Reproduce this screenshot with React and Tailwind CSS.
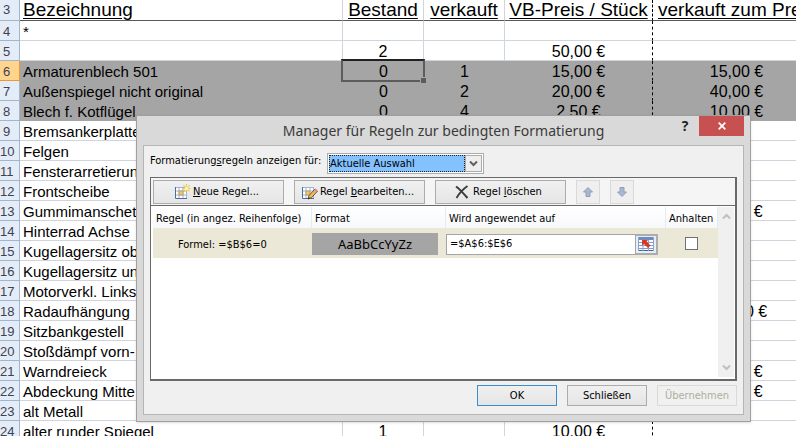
const rows = [
  { n: 4, name: '*' },
  { n: 5, name: '', stock: '2', price: '50,00 €' },
  { n: 6, name: 'Armaturenblech 501', stock: '0', sold: '1', price: '15,00 €', total: '15,00 €', active: true },
  { n: 7, name: 'Außenspiegel nicht original', stock: '0', sold: '2', price: '20,00 €', total: '40,00 €', grey: true },
  { n: 8, name: 'Blech f. Kotflügel', stock: '0', sold: '4', price: '2,50 €', total: '10,00 €', grey: true },
  { n: 9, name: 'Bremsankerplatte' },
  { n: 10, name: 'Felgen' },
  { n: 11, name: 'Fensterarretierung' },
  { n: 12, name: 'Frontscheibe' },
  { n: 13, name: 'Gummimanschette', total: '10,00 €' },
  { n: 14, name: 'Hinterrad Achse' },
  { n: 15, name: 'Kugellagersitz oben' },
  { n: 16, name: 'Kugellagersitz unten' },
  { n: 17, name: 'Motorverkl. Links' },
  { n: 18, name: 'Radaufhängung', total: '100,00 €' },
  { n: 19, name: 'Sitzbankgestell' },
  { n: 20, name: 'Stoßdämpf vorn-' },
  { n: 21, name: 'Warndreieck', total: '10,00 €' },
  { n: 22, name: 'Abdeckung Mitte', total: '10,00 €' },
  { n: 23, name: 'alt Metall' },
  { n: 24, name: 'alter runder Spiegel', stock: '1', price: '10,00 €' },
];

function SheetRow({ row }) {
  const grey = row.active || row.grey;
  const cell = grey
    ? 'bg-[#a5a5a5] border-b border-[#a5a5a5] p-0 pt-0.5 text-center whitespace-nowrap'
    : 'border-b border-r border-[#d0d4dc] p-0 pt-0.5 text-center whitespace-nowrap';
  const dashed = grey
    ? 'bg-[#a5a5a5] border-b border-r border-b-[#a5a5a5] border-r-black [border-right-style:dashed] p-0 pt-0.5 text-center whitespace-nowrap'
    : 'border-b border-r border-b-[#d0d4dc] border-r-black [border-right-style:dashed] p-0 pt-0.5 text-center whitespace-nowrap';
  return (
    <tr className="h-5">
      <th
        scope="row"
        className={
          row.active
            ? 'border-b border-r border-[#f29536] bg-[#ffd58d] p-0 pt-0.5 pr-1.5 text-center text-[13px] leading-[17px] font-normal text-[#3b4252]'
            : 'border-b border-r border-[#9eb6ce] bg-[#e4ecf7] p-0 pt-0.5 pr-1.5 text-center text-[13px] leading-[17px] font-normal text-[#3b4252]'
        }
      >
        {row.n}
      </th>
      <td className={cell}>
        <div className="pl-[3px] text-left text-[15px] leading-[17px]">{row.name}</div>
      </td>
      <td className={cell}>
        {row.active ? (
          <div className="relative">
            {row.stock}
            <span className="absolute -top-1 -right-px bottom-[-2px] -left-[2px] border-2 border-[#5c5c5c] border-t-[#202020]" />
            <span className="absolute -right-[2px] -bottom-[3px] size-[6px] border-t border-l border-[#a5a5a5] bg-[#5c5c5c]" />
          </div>
        ) : (
          row.stock
        )}
      </td>
      <td className={cell}>{row.sold}</td>
      <td className={dashed}>{row.price}</td>
      <td className={cell}>{row.total}</td>
    </tr>
  );
}

function Sheet() {
  const head = 'border-b border-[#5a5a5a] border-r border-r-[#d0d4dc] p-0 font-normal whitespace-nowrap underline underline-offset-2';
  return (
    <table className="w-full min-w-[820px] table-fixed border-separate border-spacing-0 text-base leading-[17px]">
      <colgroup>
        <col className="w-5" />
        <col className="w-[323px]" />
        <col className="w-[81px]" />
        <col className="w-[81px]" />
        <col className="w-[148px]" />
        <col />
      </colgroup>
      <thead>
        <tr className="h-[21px] text-[19px] leading-5">
          <th className="border-r border-b border-[#9eb6ce] bg-[#e4ecf7] p-0 pr-1.5 text-[13px] leading-5 font-normal text-[#3b4252]">3</th>
          <th scope="col" className={head}>
            <div className="pl-[3px] text-left">Bezeichnung</div>
          </th>
          <th scope="col" className={head}>Bestand</th>
          <th scope="col" className={head}>verkauft</th>
          <th scope="col" className="border-r border-b border-r-black border-b-[#5a5a5a] [border-right-style:dashed] p-0 font-normal whitespace-nowrap underline underline-offset-2">VB-Preis / Stück</th>
          <th scope="col" className={head}>
            <div className="pl-[5px] text-left">verkauft zum Preis</div>
          </th>
        </tr>
      </thead>
      <tbody>
        {rows.map((row) => (
          <SheetRow key={row.n} row={row} />
        ))}
      </tbody>
    </table>
  );
}

function GridIcon({ children }) {
  return (
    <svg width="17" height="17" viewBox="0 0 17 17" aria-hidden="true">
      <rect x="1" y="3" width="12" height="12" fill="#fff" />
      <path d="M5 3v12M9 3v12M12.500 3v12" stroke="#9fb4d6" />
      <path d="M1 3.500h12M1 7h12M1 11h12" stroke="#9fb4d6" />
      <path d="M1.500 3v11.500h11.500" fill="none" stroke="#4a6ba3" />
      <rect x="5" y="7" width="4" height="4" fill="#f3c75c" stroke="#a8935a" strokeWidth=".7" />
      {children}
    </svg>
  );
}

function NewRuleIcon() {
  return (
    <GridIcon>
      <path d="M12.500 0v9M8 4.500h9M9.500 1.500l6 6M15.500 1.500l-6 6" stroke="#edc52a" strokeWidth="1.200" strokeDasharray="1.500 .6" />
      <circle cx="12.500" cy="4.500" r="1.700" fill="#fff6b0" />
    </GridIcon>
  );
}

function EditRuleIcon() {
  return (
    <GridIcon>
      <path d="M7 15l1-3.500 6-6.500 2.500 2.200-6 6.500z" fill="#f0b858" stroke="#5c4a33" strokeWidth=".9" />
      <path d="M13 6l1.500-1.500 2 2L15 8z" fill="#d98c8c" />
      <path d="M7 15l.7-2 1.300 1.200z" fill="#222" />
    </GridIcon>
  );
}

function DeleteIcon() {
  return (
    <svg width="16" height="14" viewBox="0 0 16 14" aria-hidden="true">
      <path d="M1 1.500C4 3.500 9 9 12.500 13" stroke="#3c3c3c" strokeWidth="2" fill="none" />
      <path d="M12.500 1C9 3.500 4 8.500 1.500 13" stroke="#3c3c3c" strokeWidth="1.800" fill="none" />
    </svg>
  );
}

function ArrowIcon({ down }) {
  return (
    <svg width="10" height="10" viewBox="0 0 10 10" aria-hidden="true">
      <path
        d={down ? 'M5 9.500L.5 5H3V.5h4V5h2.500z' : 'M5 .5L.5 5H3v4.500h4V5h2.500z'}
        fill="#a9b8cf"
        stroke="#8f9fb9"
      />
    </svg>
  );
}

function RangeIcon() {
  return (
    <svg width="16" height="14" viewBox="0 0 16 14" aria-hidden="true">
      <rect x="0" y="0" width="16" height="14" fill="#fff" />
      <rect x="0" y="0" width="16" height="3" fill="#6d8cc0" />
      <path d="M0 5.500h16M0 8.500h16M0 11.500h16" stroke="#7f9ccb" />
      <path d="M0 13.500h16" stroke="#3f62a0" />
      <path d="M.5 0v14M5 3v11M10.500 3v11M15.500 0v14" stroke="#89a4cf" />
      <path d="M4 3h6L8.500 4.500l4 4-2.500 2.500-4-4L4 8.500z" fill="#d9371f" />
    </svg>
  );
}

function Chevron({ up, stroke }) {
  return (
    <svg width="9" height="7" viewBox="0 0 9 7" aria-hidden="true">
      <path d={up ? 'M1 5.500L4.500 2L8 5.500' : 'M1 1.500L4.500 5L8 1.500'} fill="none" stroke={stroke} strokeWidth="2" />
    </svg>
  );
}

const toolButton =
  'flex h-6 w-[131px] items-center justify-center gap-0.5 border border-[#acacac] bg-linear-to-b from-[#f0f0f0] to-[#e5e5e5] pt-px pr-1 whitespace-nowrap';
const arrowButton = 'flex size-6 items-center justify-center border border-[#d9d9d9] bg-[#efefef]';
const footButton = 'h-[21px] w-20 border bg-linear-to-b from-[#f0f0f0] to-[#e5e5e5] pt-0.5';

function Toolbar() {
  return (
    <div className="flex h-7 items-center border-b border-[#696969] bg-[#f5f5f5] pl-0.5">
      <div className="flex gap-2.5">
        <button type="button" className={toolButton}>
          <NewRuleIcon />
          <span><u>N</u>eue Regel...</span>
        </button>
        <button type="button" className={toolButton}>
          <EditRuleIcon />
          <span>Regel <u>b</u>earbeiten...</span>
        </button>
        <button type="button" className={toolButton}>
          <DeleteIcon />
          <span>Regel <u>l</u>öschen</span>
        </button>
        <button type="button" aria-label="Nach oben" className={arrowButton}>
          <ArrowIcon />
        </button>
        <button type="button" aria-label="Nach unten" className={arrowButton}>
          <ArrowIcon down />
        </button>
      </div>
    </div>
  );
}

function RuleList() {
  const th = 'border-r border-[#e3ebf3] p-0 pt-1 pl-[3px] text-left font-normal whitespace-nowrap';
  return (
    <div className="flex h-[173px] justify-between bg-white pt-px pr-px pb-0.5 pl-0.5">
      <table className="w-[565px] table-fixed border-separate border-spacing-0 self-start">
        <colgroup>
          <col className="w-[159px]" />
          <col className="w-[134px]" />
          <col className="w-[220px]" />
          <col />
        </colgroup>
        <thead>
          <tr className="h-[21px] bg-linear-to-b from-white to-[#f7f8fa]">
            <th scope="col" className={th}>Regel (in angez. Reihenfolge)</th>
            <th scope="col" className={th}>Format</th>
            <th scope="col" className={th}>Wird angewendet auf</th>
            <th scope="col" className={th}>Anhalten</th>
          </tr>
        </thead>
        <tbody>
          <tr className="h-[30px] bg-[#ebe8d7]">
            <td className="p-0 pt-1 pl-[25px]">Formel: =$B$6=0</td>
            <td className="p-0 pt-0.5 pr-2">
              <div className="h-[22px] bg-[#a5a5a5] text-center font-['Noto_Sans',sans-serif] text-[13px] leading-[22px]">AaBbCcYyZz</div>
            </td>
            <td className="p-0 pt-0.5 pr-2">
              <div className="flex h-[21px]">
                <input
                  aria-label="Wird angewendet auf"
                  defaultValue="=$A$6:$E$6"
                  className="min-w-0 flex-1 border border-[#a5a5a5] bg-white pt-px pl-[3px] outline-none"
                />
                <button type="button" aria-label="Bereich auswählen" className="flex w-[22px] items-center justify-center border-2 border-l-0 border-[#acacac] bg-[#e8edf5]">
                  <RangeIcon />
                </button>
              </div>
            </td>
            <td className="p-0">
              <input
                type="checkbox"
                aria-label="Anhalten"
                className="ml-[19px] block size-[13px] appearance-none border border-[#707070] bg-white"
              />
            </td>
          </tr>
        </tbody>
      </table>
      <div className="flex w-4 flex-col items-center justify-between bg-[#f0f0f0] py-1.5">
        <Chevron up stroke="#bfbfbf" />
        <Chevron stroke="#bfbfbf" />
      </div>
    </div>
  );
}

function RuleManager() {
  return (
    <section
      role="dialog"
      aria-labelledby="rule-manager-title"
      className="absolute top-[115px] left-[136px] w-[615px] border border-[#a0a0a0] bg-[#d9d9d9] px-1.5 pb-1.5 font-['DejaVu_Sans_Condensed','DejaVu_Sans',sans-serif] text-[11px] text-black shadow-sm"
    >
      <header className="relative flex h-[29px] items-center justify-center">
        <h1 id="rule-manager-title" className="font-['Noto_Sans',sans-serif] text-sm text-[#3a3a3a]">
          Manager für Regeln zur bedingten Formatierung
        </h1>
        <div className="absolute top-0 right-0 flex">
          <button type="button" aria-label="Hilfe" className="h-5 w-7 font-['Open_Sans',sans-serif] text-sm leading-5 font-bold text-[#222]">?</button>
          <button type="button" aria-label="Fenster schließen" className="flex h-5 w-[45px] items-center justify-center bg-[#c75050]">
            <svg width="8" height="8" viewBox="0 0 8 8" aria-hidden="true">
              <path d="M.7.700l6.600 6.600M7.300.700L.7 7.300" stroke="#fff" strokeWidth="1.700" />
            </svg>
          </button>
        </div>
      </header>
      <div className="border border-[#b5b5b5] bg-[#f0f0f0] px-1.5 pt-[7px] pb-2">
        <div className="flex h-[21px] items-center">
          <label htmlFor="rule-scope" className="w-[177px] pb-1 whitespace-nowrap">
            Formatierung<u>s</u>regeln anzeigen für:
          </label>
          <div className="relative h-[21px] w-[157px] border border-[#acacac] bg-white p-px">
            <select id="rule-scope" className="h-[17px] w-[136px] appearance-none border border-dotted border-[#222] bg-[#84c1ff] outline-none">
              <option>Aktuelle Auswahl</option>
            </select>
            <span className="pointer-events-none absolute top-px right-px flex h-[17px] w-[17px] items-center justify-center border border-[#acacac] bg-[#eee]">
              <Chevron stroke="#606060" />
            </span>
          </div>
        </div>
        <div className="mt-[3px] border border-r-2 border-b-2 border-[#696969]">
          <Toolbar />
          <RuleList />
        </div>
        <div className="mt-1 flex justify-end gap-2.5">
          <button type="button" className={footButton + ' border-[#3c8ed1]'}>OK</button>
          <button type="button" className={footButton + ' border-[#acacac]'}>Schließen</button>
          <button type="button" disabled className="h-[21px] w-20 border border-[#d9d9d9] bg-[#f0f0f0] pt-0.5 text-[#aeae9e]">Übernehmen</button>
        </div>
      </div>
    </section>
  );
}

export default function App() {
  return (
    <main className="relative h-screen overflow-hidden bg-white font-['Liberation_Sans',Arial,sans-serif] text-black">
      <Sheet />
      <RuleManager />
    </main>
  );
}
